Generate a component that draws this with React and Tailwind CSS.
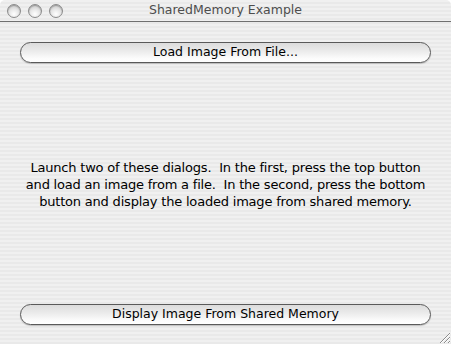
import React from 'react'

const stripes =
  'bg-[repeating-linear-gradient(to_bottom,#f0f0f0_0px,#f0f0f0_2px,#e9e9e9_2px,#e9e9e9_4px)]'

function Light() {
  return (
    <div className="w-[14px] h-[14px] rounded-full border border-[#8a8a8a] bg-[radial-gradient(circle_at_50%_75%,#ffffff_0%,#e6e6e6_45%,#bdbdbd_100%)] shadow-[inset_0_1px_1px_rgba(0,0,0,0.25)]" />
  )
}

function AquaButton({ children }) {
  return (
    <button className="w-full h-[21px] rounded-full border border-[#5a5a5a] bg-[linear-gradient(to_bottom,#dcdcdc_0%,#ececec_45%,#fbfbfb_80%,#ffffff_100%)] shadow-[0_1px_1px_rgba(0,0,0,0.2)] text-[12.5px] text-black flex items-center justify-center leading-none">
      {children}
    </button>
  )
}

export default function App() {
  return (
    <div className="w-[451px] h-[344px] bg-white font-['DejaVu_Sans',sans-serif]">
      <div className={`w-full h-full rounded-t-[5px] overflow-hidden flex flex-col ${stripes}`}>
        <div className="relative h-[22px] border-b border-[#707070] flex items-center shrink-0">
          <div className="flex gap-[7px] pl-[7px] pt-[1px]">
            <Light />
            <Light />
            <Light />
          </div>
          <div className="absolute inset-0 flex items-center justify-center text-[12.5px] text-[#4d4d4d]">
            SharedMemory Example
          </div>
        </div>

        <div className="flex-1 flex flex-col px-[20px] pt-[20px] pb-[19px] relative">
          <AquaButton>Load Image From File...</AquaButton>
          <div className="flex-1 flex items-center justify-center pt-[2px]">
            <p className="text-center text-[13px] leading-[17px] text-black tracking-[-0.2px] whitespace-nowrap">
              Launch two of these dialogs.&nbsp; In the first, press the top button
              <br />
              and load an image from a file.&nbsp; In the second, press the bottom
              <br />
              button and display the loaded image from shared memory.
            </p>
          </div>
          <AquaButton>Display Image From Shared Memory</AquaButton>

          <svg className="absolute right-[1px] bottom-[1px]" width="12" height="12" viewBox="0 0 12 12">
            <path d="M2 12 L12 2 M6 12 L12 6 M10 12 L12 10" stroke="#8c8c8c" strokeWidth="1" />
            <path d="M3 12 L12 3 M7 12 L12 7 M11 12 L12 11" stroke="#ffffff" strokeWidth="1" />
          </svg>
        </div>
      </div>
    </div>
  )
}
